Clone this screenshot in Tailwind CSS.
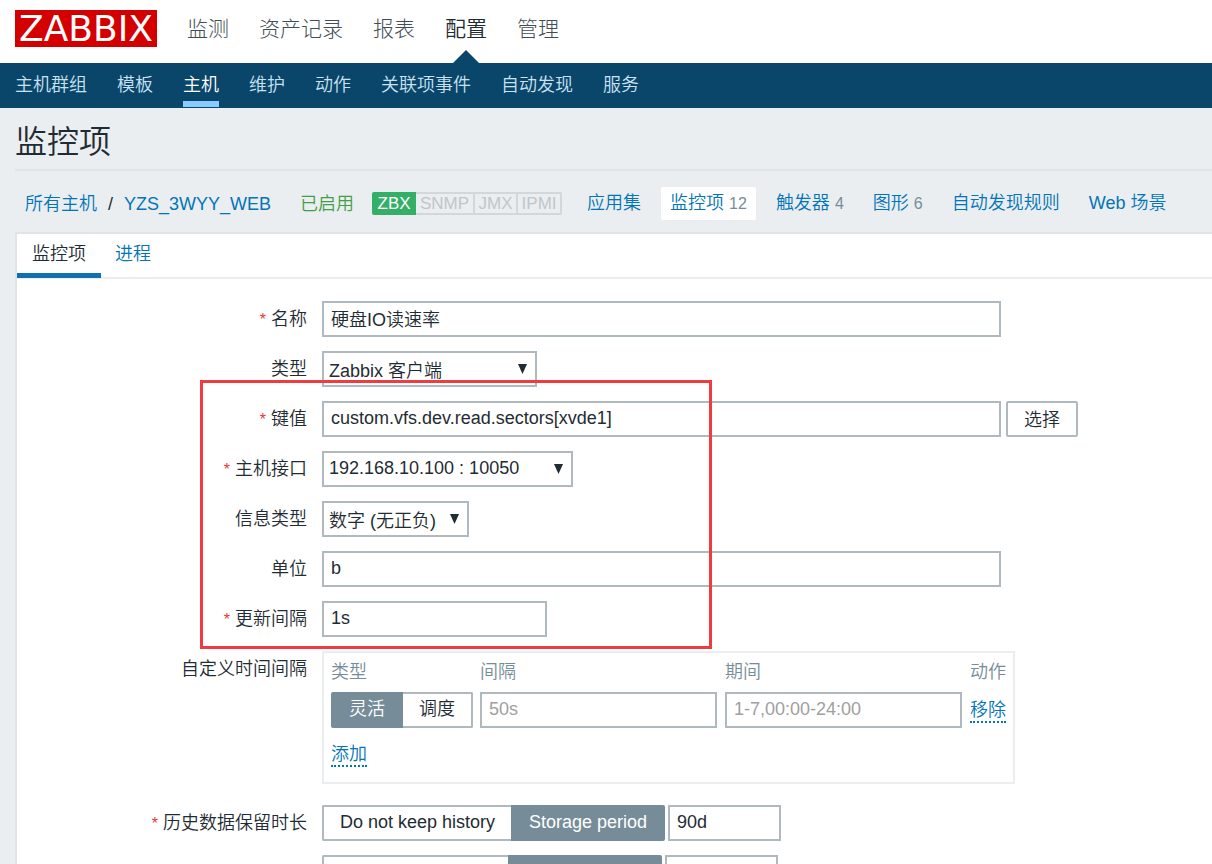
<!DOCTYPE html>
<html lang="zh-CN">
<head>
<meta charset="utf-8">
<meta name="viewport" content="width=device-width, initial-scale=1">
<title>监控项</title>
<script src="https://cdn.jsdelivr.net/npm/@tailwindcss/browser@4"></script>
</head>
<body class="h-screen overflow-hidden flex flex-col bg-[#ebeef0] font-['Liberation_Sans','Noto_Sans_CJK_SC',sans-serif] font-[350] text-lg leading-6 text-[#1f2c33]">

<header class="shrink-0">
  <div class="flex h-[63px] items-start gap-[30px] bg-white px-[15px]">
    <a href="#" class="mt-[10px] flex h-[37px] w-[142px] items-center justify-center bg-[#d40000] font-['DejaVu_Sans',sans-serif] text-[36px] font-normal leading-none text-white">ZABBIX</a>
    <nav class="flex h-full gap-[30px] pt-[13px] text-[21px] leading-8 font-light text-[#3f4d55]">
      <a href="#">监测</a>
      <a href="#">资产记录</a>
      <a href="#">报表</a>
      <a href="#" class="relative font-[350] text-[#1f2c33]">配置
        <svg class="absolute bottom-0 left-1/2 -translate-x-1/2" width="26" height="13" viewBox="0 0 26 13" aria-hidden="true"><path d="M0 13 13 0l13 13z" fill="#0a466a"/></svg>
      </a>
      <a href="#">管理</a>
    </nav>
  </div>
  <nav class="flex h-[45px] gap-[30px] bg-[#0a466a] px-[15px] pb-px text-[#c9e2f2]">
    <a href="#" class="pt-[10px]">主机群组</a>
    <a href="#" class="pt-[10px]">模板</a>
    <a href="#" class="border-b-6 border-[#88ccff] pt-[10px] text-white">主机</a>
    <a href="#" class="pt-[10px]">维护</a>
    <a href="#" class="pt-[10px]">动作</a>
    <a href="#" class="pt-[10px]">关联项事件</a>
    <a href="#" class="pt-[10px]">自动发现</a>
    <a href="#" class="pt-[10px]">服务</a>
  </nav>
</header>

<main class="flex min-h-0 grow flex-col pl-[15px]">
  <h1 class="h-[63px] shrink-0 border-b-2 border-[#dfe4e7] pt-[14px] text-[32px] leading-10 font-[350]">监控项</h1>

  <div class="flex h-[61px] shrink-0 items-center whitespace-nowrap pl-[10px] pt-1 text-[#0275b8]">
    <a href="#">所有主机</a>
    <span class="mx-[11px] text-[#1f2c33]">/</span>
    <a href="#">YZS_3WYY_WEB</a>
    <span class="ml-[29px] text-[#429e47]">已启用</span>
    <span class="ml-[18px] flex h-[23px] text-[17px] leading-[23px] text-[#c0c6c9]">
      <span class="w-[44px] rounded-l-xs bg-[#34af67] text-center text-white">ZBX</span>
      <span class="w-[59px] border-2 border-l-0 border-[#d2d7d9] text-center leading-5">SNMP</span>
      <span class="w-[43px] border-2 border-l-0 border-[#d2d7d9] text-center leading-5">JMX</span>
      <span class="w-[44px] rounded-r-xs border-2 border-l-0 border-[#d2d7d9] text-center leading-5">IPMI</span>
    </span>
    <nav class="ml-4 flex gap-[11px]">
      <a href="#" class="px-[9px] py-1">应用集</a>
      <a href="#" class="rounded-xs bg-white px-[9px] py-1">监控项 <span class="text-base text-[#768d99]">12</span></a>
      <a href="#" class="px-[9px] py-1">触发器 <span class="text-base text-[#768d99]">4</span></a>
      <a href="#" class="px-[9px] py-1">图形 <span class="text-base text-[#768d99]">6</span></a>
      <a href="#" class="px-[9px] py-1">自动发现规则</a>
      <a href="#" class="px-[9px] py-1">Web 场景</a>
    </nav>
  </div>

  <section class="grow border-l-2 border-t-2 border-[#dfe4e7] bg-white">
    <div class="flex h-[45px] border-b-2 border-[#ebeef0]">
      <button type="button" class="-mb-px flex border-b-5 border-[#0f71ae] px-[15px] pt-2">监控项</button>
      <button type="button" class="flex px-[14px] pt-2 text-[#0275b8]">进程</button>
    </div>

    <form class="relative grid grid-cols-[290px_1fr] gap-x-[15px] gap-y-[14px] pt-[22px]">
      <label for="name" class="pt-[6px] text-right"><span class="text-base leading-none text-[#e33734]">*</span> 名称</label>
      <div><input id="name" value="硬盘IO读速率" class="block h-9 w-[679px] border-2 border-[#b0b9be] bg-white px-[7px] pb-[2px]"></div>

      <label for="type" class="pt-[6px] text-right">类型</label>
      <div class="relative w-[215px]">
        <select id="type" class="block h-9 w-full appearance-none border-2 border-[#b0b9be] bg-white px-[5px] pt-[3px] text-[#1f2c33]"><option>Zabbix 客户端</option></select>
        <svg class="pointer-events-none absolute right-[10px] top-[13px]" width="9" height="10" viewBox="0 0 9 10" aria-hidden="true"><path d="M0 0h9L4.500 10z" fill="#1f2c33"/></svg>
      </div>

      <label for="key" class="pt-[6px] text-right"><span class="text-base leading-none text-[#e33734]">*</span> 键值</label>
      <div class="flex gap-[5px]">
        <input id="key" value="custom.vfs.dev.read.sectors[xvde1]" class="block h-9 w-[679px] border-2 border-[#b0b9be] bg-white px-[7px] pb-[2px]">
        <button type="button" class="h-9 w-[72px] rounded-xs border-2 border-[#b0b9be] bg-white pt-[2px]">选择</button>
      </div>

      <label for="interface" class="pt-[6px] text-right"><span class="text-base leading-none text-[#e33734]">*</span> 主机接口</label>
      <div class="relative w-[251px]">
        <select id="interface" class="block h-9 w-full appearance-none border-2 border-[#b0b9be] bg-white px-[5px] pb-[2px] text-[#1f2c33]"><option>192.168.10.100 : 10050</option></select>
        <svg class="pointer-events-none absolute right-[10px] top-[13px]" width="9" height="10" viewBox="0 0 9 10" aria-hidden="true"><path d="M0 0h9L4.500 10z" fill="#1f2c33"/></svg>
      </div>

      <label for="info" class="pt-[6px] text-right">信息类型</label>
      <div class="relative w-[147px]">
        <select id="info" class="block h-9 w-full appearance-none border-2 border-[#b0b9be] bg-white px-[5px] pt-[3px] text-[#1f2c33]"><option>数字 (无正负)</option></select>
        <svg class="pointer-events-none absolute right-[10px] top-[13px]" width="9" height="10" viewBox="0 0 9 10" aria-hidden="true"><path d="M0 0h9L4.500 10z" fill="#1f2c33"/></svg>
      </div>

      <label for="units" class="pt-[6px] text-right">单位</label>
      <div><input id="units" value="b" class="block h-9 w-[679px] border-2 border-[#b0b9be] bg-white px-[7px] pb-[2px]"></div>

      <label for="delay" class="pt-[6px] text-right"><span class="text-base leading-none text-[#e33734]">*</span> 更新间隔</label>
      <div><input id="delay" value="1s" class="block h-9 w-[225px] border-2 border-[#b0b9be] bg-white px-[7px] pb-[2px]"></div>

      <span id="custom" class="pt-[6px] text-right">自定义时间间隔</span>
      <div class="mb-[7px] h-[133px] w-[693px] border-2 border-[#ebeef0] px-[7px] pt-[7px]">
        <table aria-labelledby="custom" class="w-full table-fixed text-left">
          <thead class="text-[#768d99]">
            <tr>
              <th class="w-[149px] font-[350]">类型</th>
              <th class="w-[245px] font-[350]">间隔</th>
              <th class="w-[245px] font-[350]">期间</th>
              <th class="font-[350]">动作</th>
            </tr>
          </thead>
          <tbody>
            <tr>
              <td class="pt-2">
                <div class="flex h-9 w-[142px]">
                  <label class="flex w-[72px] justify-center rounded-l-xs bg-[#768d99] pt-[5px] text-white"><input type="radio" name="kind" checked class="sr-only">灵活</label>
                  <label class="flex w-[70px] justify-center rounded-r-xs border-2 border-l-0 border-[#b0b9be] pt-[3px]"><input type="radio" name="kind" class="sr-only">调度</label>
                </div>
              </td>
              <td class="pt-2"><input aria-label="间隔" placeholder="50s" class="block h-9 w-[237px] border-2 border-[#b0b9be] bg-white px-[7px] pb-[2px] placeholder:text-[#a0a0a0]"></td>
              <td class="pt-2"><input aria-label="期间" placeholder="1-7,00:00-24:00" class="block h-9 w-[237px] border-2 border-[#b0b9be] bg-white px-[7px] pb-[2px] placeholder:text-[#a0a0a0]"></td>
              <td class="pt-[10px]"><button type="button" class="block border-b-2 border-dotted border-[#0275b8] leading-[22px] text-[#0275b8]">移除</button></td>
            </tr>
          </tbody>
        </table>
        <button type="button" class="mt-[15px] block border-b-2 border-dotted border-[#0275b8] leading-[22px] text-[#0275b8]">添加</button>
      </div>

      <label for="history" class="pt-[6px] text-right"><span class="text-base leading-none text-[#e33734]">*</span> 历史数据保留时长</label>
      <div class="flex gap-[3px]">
        <div class="flex h-9">
          <label class="flex w-[189px] justify-center rounded-l-xs border-2 border-r-0 border-[#b0b9be] pt-[3px]"><input type="radio" name="history_mode" class="sr-only">Do not keep history</label>
          <label class="flex w-[154px] justify-center rounded-r-xs bg-[#768d99] pt-[5px] text-white"><input type="radio" name="history_mode" checked class="sr-only">Storage period</label>
        </div>
        <input id="history" value="90d" class="block h-9 w-[113px] border-2 border-[#b0b9be] bg-white px-[7px] pb-[2px]">
      </div>

      <div class="col-start-2 flex gap-[3px]">
        <div class="flex h-9">
          <label class="flex w-[186px] rounded-l-xs border-2 border-r-0 border-[#b0b9be]"><input type="radio" name="trends_mode" aria-label="Do not keep trends" class="sr-only"></label>
          <label class="flex w-[154px] rounded-r-xs bg-[#768d99]"><input type="radio" name="trends_mode" aria-label="Storage period" checked class="sr-only"></label>
        </div>
        <input aria-label="Trend storage period" class="block h-9 w-[113px] border-2 border-[#b0b9be] bg-white px-[7px]">
      </div>

      <!-- Highlight frame over the key settings -->
      <div class="pointer-events-none absolute left-[183px] top-[101px] h-[269px] w-[512px] border-3 border-[#f03c3f]"></div>
    </form>
  </section>
</main>
</body>
</html>
